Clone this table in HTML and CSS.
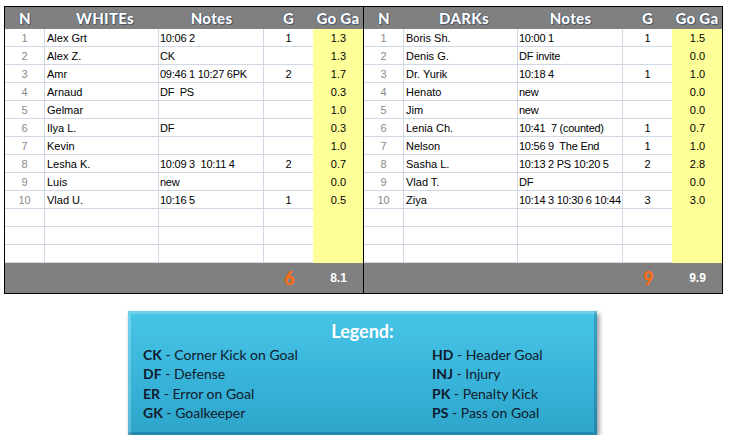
FILE: index.html
```html
<!DOCTYPE html>
<html>
<head>
<meta charset="utf-8">
<link rel="stylesheet" href="styles.css">
</head>
<body>
<div class="board">
  <div class="sheet">
    <div class="row head"><div class="c n">N</div><div class="c name">WHITEs</div><div class="c notes">Notes</div><div class="c g">G</div><div class="c avg">Go Ga</div></div>
    <div class="row"><div class="c n">1</div><div class="c name">Alex Grt</div><div class="c notes">10:06 2</div><div class="c g">1</div><div class="c avg">1.3</div></div>
    <div class="row"><div class="c n">2</div><div class="c name">Alex Z.</div><div class="c notes">CK</div><div class="c g"></div><div class="c avg">1.3</div></div>
    <div class="row"><div class="c n">3</div><div class="c name">Amr</div><div class="c notes">09:46 1 10:27 6PK</div><div class="c g">2</div><div class="c avg">1.7</div></div>
    <div class="row"><div class="c n">4</div><div class="c name">Arnaud</div><div class="c notes">DF&nbsp; PS</div><div class="c g"></div><div class="c avg">0.3</div></div>
    <div class="row"><div class="c n">5</div><div class="c name">Gelmar</div><div class="c notes"></div><div class="c g"></div><div class="c avg">1.0</div></div>
    <div class="row"><div class="c n">6</div><div class="c name">Ilya L.</div><div class="c notes">DF</div><div class="c g"></div><div class="c avg">0.3</div></div>
    <div class="row"><div class="c n">7</div><div class="c name">Kevin</div><div class="c notes"></div><div class="c g"></div><div class="c avg">1.0</div></div>
    <div class="row"><div class="c n">8</div><div class="c name">Lesha K.</div><div class="c notes">10:09 3&nbsp; 10:11 4</div><div class="c g">2</div><div class="c avg">0.7</div></div>
    <div class="row"><div class="c n">9</div><div class="c name">Luis</div><div class="c notes">new</div><div class="c g"></div><div class="c avg">0.0</div></div>
    <div class="row"><div class="c n">10</div><div class="c name">Vlad U.</div><div class="c notes">10:16 5</div><div class="c g">1</div><div class="c avg">0.5</div></div>
    <div class="row"><div class="c n"></div><div class="c name"></div><div class="c notes"></div><div class="c g"></div><div class="c avg"></div></div>
    <div class="row"><div class="c n"></div><div class="c name"></div><div class="c notes"></div><div class="c g"></div><div class="c avg"></div></div>
    <div class="row"><div class="c n"></div><div class="c name"></div><div class="c notes"></div><div class="c g"></div><div class="c avg"></div></div>
    <div class="row foot"><div class="c n"></div><div class="c name"></div><div class="c notes"></div><div class="c g total">6</div><div class="c avg sum">8.1</div></div>
  </div>
  <div class="sheet">
    <div class="row head"><div class="c n">N</div><div class="c name">DARKs</div><div class="c notes">Notes</div><div class="c g">G</div><div class="c avg">Go Ga</div></div>
    <div class="row"><div class="c n">1</div><div class="c name">Boris Sh.</div><div class="c notes">10:00 1</div><div class="c g">1</div><div class="c avg">1.5</div></div>
    <div class="row"><div class="c n">2</div><div class="c name">Denis G.</div><div class="c notes">DF invite</div><div class="c g"></div><div class="c avg">0.0</div></div>
    <div class="row"><div class="c n">3</div><div class="c name">Dr. Yurik</div><div class="c notes">10:18 4</div><div class="c g">1</div><div class="c avg">1.0</div></div>
    <div class="row"><div class="c n">4</div><div class="c name">Henato</div><div class="c notes">new</div><div class="c g"></div><div class="c avg">0.0</div></div>
    <div class="row"><div class="c n">5</div><div class="c name">Jim</div><div class="c notes">new</div><div class="c g"></div><div class="c avg">0.0</div></div>
    <div class="row"><div class="c n">6</div><div class="c name">Lenia Ch.</div><div class="c notes">10:41&nbsp; 7 (counted)</div><div class="c g">1</div><div class="c avg">0.7</div></div>
    <div class="row"><div class="c n">7</div><div class="c name">Nelson</div><div class="c notes">10:56 9&nbsp; The End</div><div class="c g">1</div><div class="c avg">1.0</div></div>
    <div class="row"><div class="c n">8</div><div class="c name">Sasha L.</div><div class="c notes">10:13 2 PS 10:20 5</div><div class="c g">2</div><div class="c avg">2.8</div></div>
    <div class="row"><div class="c n">9</div><div class="c name">Vlad T.</div><div class="c notes">DF</div><div class="c g"></div><div class="c avg">0.0</div></div>
    <div class="row"><div class="c n">10</div><div class="c name">Ziya</div><div class="c notes">10:14 3 10:30 6 10:44</div><div class="c g">3</div><div class="c avg">3.0</div></div>
    <div class="row"><div class="c n"></div><div class="c name"></div><div class="c notes"></div><div class="c g"></div><div class="c avg"></div></div>
    <div class="row"><div class="c n"></div><div class="c name"></div><div class="c notes"></div><div class="c g"></div><div class="c avg"></div></div>
    <div class="row"><div class="c n"></div><div class="c name"></div><div class="c notes"></div><div class="c g"></div><div class="c avg"></div></div>
    <div class="row foot"><div class="c n"></div><div class="c name"></div><div class="c notes"></div><div class="c g total">9</div><div class="c avg sum">9.9</div></div>
  </div>
</div>

<div class="legend">
  <h2 class="legend-title">Legend:</h2>
  <div class="keys">
    <p><b>CK</b> - Corner Kick on Goal</p>
    <p><b>DF</b> - Defense</p>
    <p><b>ER</b> - Error on Goal</p>
    <p><b>GK</b> - Goalkeeper</p>
    <p><b>HD</b> - Header Goal</p>
    <p><b>INJ</b> - Injury</p>
    <p><b>PK</b> - Penalty Kick</p>
    <p><b>PS</b> - Pass on Goal</p>
  </div>
</div>
</body>
</html>
```
FILE: styles.css
```css
html, body {
  margin: 0;
  padding: 0;
  background: #ffffff;
}
body {
  font-family: "Liberation Sans", Arial, sans-serif;
  font-size: 11px;
  color: #000;
}
.board {
  display: flex;
  width: max-content;
  margin: 6px 0 0 4px;
  border: 1px solid #000;
}
.sheet {
  display: flex;
  flex-direction: column;
}
.sheet + .sheet {
  border-left: 1px solid #000;
}
.row {
  display: flex;
  height: 18px;
}
.c {
  box-sizing: border-box;
  height: 100%;
  border-bottom: 1px solid #d0d7e5;
  line-height: 18px;
  white-space: nowrap;
  overflow: hidden;
}
.n {
  width: 40px;
  border-right: 1px solid #d0d7e5;
  text-align: center;
  color: #8a8a8a;
}
.name {
  width: 114px;
  border-right: 1px solid #d0d7e5;
  padding-left: 2px;
}
.notes {
  width: 105px;
  border-right: 1px solid #d0d7e5;
  padding-left: 1px;
  letter-spacing: -0.25px;
}
.g {
  width: 49px;
  text-align: center;
}
.avg {
  width: 50px;
  text-align: center;
  background: #ffff99;
  border-bottom-color: #ffff99;
  padding-left: 1px;
}
.head {
  height: 22px;
}
.head .c {
  background: #808080;
  border: none;
  padding: 0;
  color: #fff;
  text-align: center;
  font-family: Lato, "Liberation Sans", sans-serif;
  font-weight: 900;
  font-size: 15px;
  line-height: 22px;
  letter-spacing: 0.3px;
  text-shadow: 0 0 1px #1d2f55, 1px 1px 0 rgba(20, 30, 70, 0.4);
}
.head .name {
  padding-left: 6px;
}
.foot {
  height: 30px;
}
.foot .c {
  background: #808080;
  border: none;
  line-height: 30px;
}
.total {
  font-family: Lato, "Liberation Sans", sans-serif;
  font-weight: 900;
  font-size: 18px;
  color: #ff6a10;
  padding-left: 2px;
}
.sum {
  font-weight: 700;
  font-size: 12px;
  color: #fff;
}
.legend {
  box-sizing: border-box;
  width: 469px;
  height: 124px;
  margin: 17px 0 0 128px;
  padding: 10px 0 0 15px;
  background: linear-gradient(#47c5e6, #38b4da 55%, #2ea4ca);
  box-shadow:
    inset 3px 3px 0 rgba(255, 255, 255, 0.22),
    inset -3px -3px 0 rgba(0, 40, 70, 0.22),
    2px 3px 5px rgba(0, 0, 0, 0.45);
  font-family: Lato, "Liberation Sans", sans-serif;
  color: #111a2c;
}
.legend-title {
  margin: 0 0 4px 0;
  padding-right: 15px;
  text-align: center;
  font-size: 18px;
  font-weight: 700;
  line-height: 20px;
  color: #fff;
}
.keys {
  display: grid;
  grid-template-columns: 289px auto;
  grid-template-rows: repeat(4, 19.3px);
  grid-auto-flow: column;
}
.keys p {
  margin: 0;
  font-size: 14px;
  line-height: 19.3px;
  white-space: nowrap;
}
.keys b {
  font-weight: 700;
}
```
